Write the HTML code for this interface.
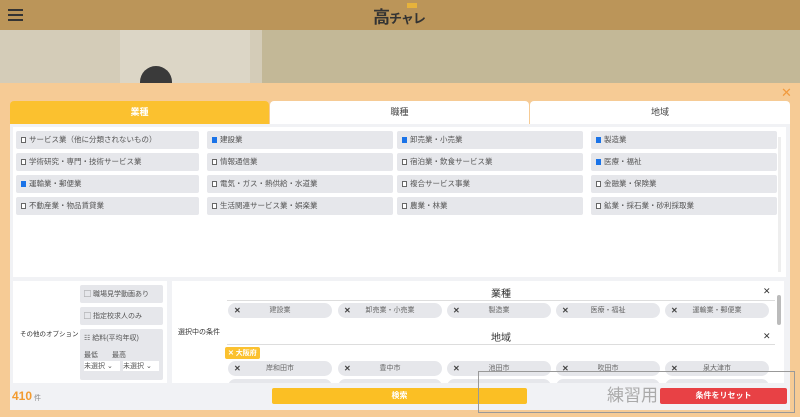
<!DOCTYPE html><html><head><meta charset="utf-8"><style>
*{margin:0;padding:0;box-sizing:border-box}
body{width:800px;height:417px;overflow:hidden;position:relative;font-family:"Liberation Sans","Noto Sans CJK JP",sans-serif;background:#f6cb95;font-size:8px;color:#555}
.a{position:absolute}
.hdr{left:0;top:0;width:800px;height:30px;background:#bb9559}
.ham{left:8px;width:15px;height:2px;background:#333}
.bg1{left:0;top:30px;width:262px;height:53px;background:#d4ccb8}
.bg2{left:262px;top:30px;width:538px;height:53px;background:#c3b897}
.tab{top:101px;height:23px;text-align:center;line-height:23px;font-size:9px;border-radius:4px 4px 0 0}
.cont{left:10px;top:124px;width:780px;height:286px;background:#f1f2f5}
.grid{left:13px;top:127px;width:773px;height:150px;background:#fff}
.it{position:absolute;height:18px;background:#e6e7eb;line-height:18px;padding-left:5px;font-size:7.5px;color:#555;border-radius:2px}
.cb{display:inline-block;width:5px;height:6px;border:1px solid #666;background:#fff;margin-right:3px;vertical-align:-1px}
.cb.c{background:#1a73e8;border-color:#1a73e8}
.box{background:#fff}
.opt{position:absolute;left:80px;width:83px;background:#e6e7eb;border-radius:2px;font-size:7px;padding:4px}
.chip{position:absolute;height:15px;width:104px;background:#e6e7eb;border-radius:8px;font-size:7px;line-height:15px;text-align:center;color:#666}
.chip b{position:absolute;left:6px;font-size:8px;color:#444}
.hd{position:absolute;left:225px;width:548px;text-align:center;font-size:10px;color:#333;border-bottom:1px solid #ddd;height:16px}
</style></head><body>
<div class="a hdr"></div>
<div class="a ham" style="top:9px"></div><div class="a ham" style="top:14px"></div><div class="a ham" style="top:19px"></div>
<div class="a" style="left:373px;top:3px;font-size:17px;font-weight:bold;color:#333;letter-spacing:-1px">高<span style="font-size:13px">チャレ</span></div>
<div class="a" style="left:407px;top:3px;width:10px;height:5px;background:#e6b23b"></div>
<div class="a bg1"></div><div class="a bg2"></div>
<div class="a" style="left:120px;top:30px;width:130px;height:53px;background:#dcd6c6"></div>
<div class="a" style="left:140px;top:66px;width:32px;height:20px;border-radius:16px 16px 0 0;background:#3a3a3a"></div>
<div class="a" style="left:0;top:83px;width:800px;height:334px;background:#f6cb95"></div>
<div class="a" style="left:781px;top:85px;font-size:13px;color:#f19a3e">✕</div>
<div class="a tab" style="left:10px;width:259px;background:#fbc12f;color:#fff;font-weight:bold">業種</div>
<div class="a tab" style="left:270px;width:259px;background:#fff;color:#444">職種</div>
<div class="a tab" style="left:530px;width:260px;background:#fff;color:#444">地域</div>
<div class="a cont"></div>
<div class="a grid">
<div class="it" style="left:3px;top:4px;width:183px"><span class="cb"></span>サービス業（他に分類されないもの）</div>
<div class="it" style="left:194px;top:4px;width:186px"><span class="cb c"></span>建設業</div>
<div class="it" style="left:384px;top:4px;width:186px"><span class="cb c"></span>卸売業・小売業</div>
<div class="it" style="left:578px;top:4px;width:186px"><span class="cb c"></span>製造業</div>
<div class="it" style="left:3px;top:26px;width:183px"><span class="cb"></span>学術研究・専門・技術サービス業</div>
<div class="it" style="left:194px;top:26px;width:186px"><span class="cb"></span>情報通信業</div>
<div class="it" style="left:384px;top:26px;width:186px"><span class="cb"></span>宿泊業・飲食サービス業</div>
<div class="it" style="left:578px;top:26px;width:186px"><span class="cb c"></span>医療・福祉</div>
<div class="it" style="left:3px;top:48px;width:183px"><span class="cb c"></span>運輸業・郵便業</div>
<div class="it" style="left:194px;top:48px;width:186px"><span class="cb"></span>電気・ガス・熱供給・水道業</div>
<div class="it" style="left:384px;top:48px;width:186px"><span class="cb"></span>複合サービス事業</div>
<div class="it" style="left:578px;top:48px;width:186px"><span class="cb"></span>金融業・保険業</div>
<div class="it" style="left:3px;top:70px;width:183px"><span class="cb"></span>不動産業・物品賃貸業</div>
<div class="it" style="left:194px;top:70px;width:186px"><span class="cb"></span>生活関連サービス業・娯楽業</div>
<div class="it" style="left:384px;top:70px;width:186px"><span class="cb"></span>農業・林業</div>
<div class="it" style="left:578px;top:70px;width:186px"><span class="cb"></span>鉱業・採石業・砂利採取業</div>
<div class="a" style="left:765px;top:10px;width:3px;height:135px;background:#eee"></div>
</div>
<div class="a box" style="left:13px;top:281px;width:154px;height:102px"></div>
<div class="a" style="left:20px;top:328px;font-size:6.5px;color:#333;white-space:nowrap">その他のオプション</div>
<div class="opt" style="top:285px;height:18px">▢ 職場見学動画あり</div>
<div class="opt" style="top:307px;height:18px">▢ 指定校求人のみ</div>
<div class="opt" style="top:329px;height:51px">☷ 給料(平均年収)<br><br>最低　　最高<div style="display:flex;gap:3px;margin-top:1px"><span style="background:#fff;width:36px">未選択 ⌄</span><span style="background:#fff;width:36px">未選択 ⌄</span></div></div>
<div class="a box" style="left:172px;top:281px;width:612px;height:102px;overflow:hidden">
<div class="a" style="left:6px;top:46px;font-size:7px;color:#333">選択中の条件</div>
<div class="hd" style="top:4px;left:55px;width:548px">業種</div><div class="a" style="left:591px;top:5px;font-size:9px;color:#333">✕</div>
<div class="chip" style="left:56px;top:22px"><b>✕</b>建設業</div>
<div class="chip" style="left:166px;top:22px"><b>✕</b>卸売業・小売業</div>
<div class="chip" style="left:275px;top:22px"><b>✕</b>製造業</div>
<div class="chip" style="left:384px;top:22px"><b>✕</b>医療・福祉</div>
<div class="chip" style="left:493px;top:22px"><b>✕</b>運輸業・郵便業</div>
<div class="hd" style="top:48px;left:55px;width:548px">地域</div><div class="a" style="left:591px;top:50px;font-size:9px;color:#333">✕</div>
<div class="a" style="left:53px;top:66px;background:#fbc12f;color:#fff;font-size:7px;font-weight:bold;padding:1px 3px;border-radius:2px">✕ 大阪府</div>
<div class="chip" style="left:56px;top:80px"><b>✕</b>岸和田市</div>
<div class="chip" style="left:166px;top:80px"><b>✕</b>豊中市</div>
<div class="chip" style="left:275px;top:80px"><b>✕</b>池田市</div>
<div class="chip" style="left:384px;top:80px"><b>✕</b>吹田市</div>
<div class="chip" style="left:493px;top:80px"><b>✕</b>泉大津市</div>
<div class="chip" style="left:56px;top:98px"></div><div class="chip" style="left:166px;top:98px"></div><div class="chip" style="left:275px;top:98px"></div><div class="chip" style="left:384px;top:98px"></div><div class="chip" style="left:493px;top:98px"></div>
<div class="a" style="left:605px;top:14px;width:4px;height:30px;background:#bbb;border-radius:2px"></div>
</div>
<div class="a" style="left:12px;top:389px;font-size:12px;color:#f29b30;font-weight:bold">410<span style="font-size:7px;color:#888;font-weight:normal"> 件</span></div>
<div class="a" style="left:272px;top:388px;width:255px;height:16px;background:#fbbf24;border-radius:2px;color:#fff;font-size:8px;font-weight:bold;text-align:center;line-height:16px">検索</div>
<div class="a" style="left:660px;top:388px;width:127px;height:16px;background:#e84145;border-radius:2px;color:#fff;font-size:8px;font-weight:bold;text-align:center;line-height:16px">条件をリセット</div>
<div class="a" style="left:478px;top:371px;width:317px;height:42px;border:1px solid #999"></div>
<div class="a" style="left:398px;top:381px;font-size:17px;color:#aaa;width:260px;text-align:right">練習用</div>
</body></html>
